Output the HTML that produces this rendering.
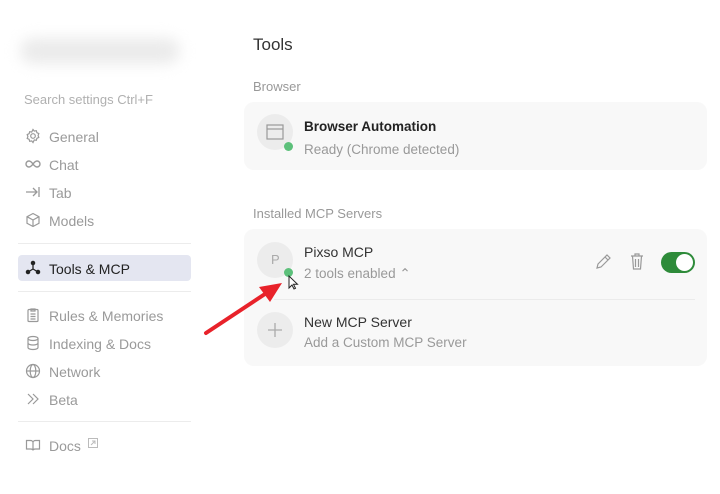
<!DOCTYPE html>
<html><head><meta charset="utf-8"><style>
*{margin:0;padding:0;box-sizing:border-box}
body{width:720px;height:494px;background:#fff;font-family:"Liberation Sans",sans-serif;position:relative;overflow:hidden;color:#222}
.a{position:absolute}
.it{position:absolute;left:49px;font-size:14px;color:#9a9a9a}
.ic{position:absolute;left:25px;width:16px;height:16px}
.sep{position:absolute;left:18px;width:173px;height:1px;background:#ececec}
.card{position:absolute;left:244px;width:463px;background:#f8f8f8;border-radius:10px}
.circ{position:absolute;width:36px;height:36px;border-radius:50%;background:#ececec}
.dot{position:absolute;width:9px;height:9px;border-radius:50%;background:#5cc07a}
</style></head><body>
<div class="a" style="left:20px;top:38px;width:160px;height:26px;border-radius:13px;background:#ebebeb;filter:blur(7px)"></div>
<div class="a" style="left:24px;top:92px;font-size:13px;color:#b0b0b0">Search settings Ctrl+F</div>

<svg class="ic" style="top:128px" viewBox="0 0 16 16" fill="none" stroke="#999" stroke-width="1.2"><circle cx="8" cy="8" r="2.3"/><path d="M8 1.5l1.3 1.6 2-.4.6 2 1.9.9-.7 1.9.7 1.9-1.9.9-.6 2-2-.4L8 14.5l-1.3-1.6-2 .4-.6-2-1.9-.9.7-1.9-.7-1.9 1.9-.9.6-2 2 .4z"/></svg>
<div class="it" style="top:129px">General</div>
<svg class="ic" style="top:156px" viewBox="0 0 16 16" fill="none" stroke="#999" stroke-width="1.4"><path d="M8 8c-1.5-2-2.5-3-4-3a3 3 0 000 6c1.5 0 2.5-1 4-3s2.5-3 4-3a3 3 0 010 6c-1.5 0-2.5-1-4-3z"/></svg>
<div class="it" style="top:157px">Chat</div>
<svg class="ic" style="top:184px" viewBox="0 0 16 16" fill="none" stroke="#999" stroke-width="1.3"><path d="M1 8h11M8 4l4 4-4 4M14 3v10"/></svg>
<div class="it" style="top:185px">Tab</div>
<svg class="ic" style="top:212px" viewBox="0 0 16 16" fill="none" stroke="#999" stroke-width="1.2"><path d="M8 1.5l6 3.2v6.6L8 14.5 2 11.3V4.7zM2 4.7L8 8l6-3.3M8 8v6.5"/></svg>
<div class="it" style="top:213px">Models</div>
<div class="sep" style="top:243px"></div>
<div class="a" style="left:18px;top:255px;width:173px;height:26px;background:#e4e6f1;border-radius:4px"></div>
<svg class="ic" style="top:260px" viewBox="0 0 16 16" fill="#222" stroke="#222" stroke-width="1.3"><path d="M8 3v6M8 9l-5 3M8 9l5 3"/><circle cx="8" cy="3" r="1.6"/><circle cx="3" cy="12" r="1.6"/><circle cx="13" cy="12" r="1.6"/></svg>
<div class="it" style="top:261px;color:#222">Tools &amp; MCP</div>
<div class="sep" style="top:291px"></div>
<svg class="ic" style="top:307px" viewBox="0 0 16 16" fill="none" stroke="#999" stroke-width="1.2"><rect x="3" y="2.5" width="10" height="12" rx="1"/><path d="M6 2h4v2H6zM5.5 7h5M5.5 9.5h5M5.5 12h5"/></svg>
<div class="it" style="top:308px">Rules &amp; Memories</div>
<svg class="ic" style="top:335px" viewBox="0 0 16 16" fill="none" stroke="#999" stroke-width="1.2"><ellipse cx="8" cy="3.5" rx="5" ry="2"/><path d="M3 3.5v9c0 1.1 2.2 2 5 2s5-.9 5-2v-9M3 8c0 1.1 2.2 2 5 2s5-.9 5-2"/></svg>
<div class="it" style="top:336px">Indexing &amp; Docs</div>
<svg class="ic" style="top:363px" viewBox="0 0 16 16" fill="none" stroke="#999" stroke-width="1.2"><circle cx="8" cy="8" r="6.5"/><ellipse cx="8" cy="8" rx="2.8" ry="6.5"/><path d="M1.5 8h13"/></svg>
<div class="it" style="top:364px">Network</div>
<svg class="ic" style="top:391px" viewBox="0 0 16 16" fill="none" stroke="#999" stroke-width="1.2"><path d="M3 3l5 5-5 5M8 3l5 5-5 5"/></svg>
<div class="it" style="top:392px">Beta</div>
<div class="sep" style="top:421px"></div>
<svg class="ic" style="top:437px" viewBox="0 0 16 16" fill="none" stroke="#999" stroke-width="1.2"><path d="M1.5 3.5h4c1.4 0 2.5.8 2.5 2v8c0-1-1-1.5-2.5-1.5h-4zM14.5 3.5h-4c-1.4 0-2.5.8-2.5 2v8c0-1 1-1.5 2.5-1.5h4z"/></svg>
<div class="it" style="top:438px">Docs</div>
<svg class="a" style="left:88px;top:438px" width="10" height="10" viewBox="0 0 10 10" fill="none" stroke="#bbb" stroke-width="1"><rect x=".5" y=".5" width="9" height="9"/><path d="M3 7l4-4M4 3h3v3"/></svg>

<div class="a" style="left:253px;top:35px;font-size:17px;color:#333">Tools</div>
<div class="a" style="left:253px;top:79px;font-size:13px;color:#999">Browser</div>
<div class="card" style="top:102px;height:68px">
 <div class="circ" style="left:13px;top:12px"></div>
 <svg class="a" style="left:22px;top:22px" width="18" height="16" viewBox="0 0 18 16" fill="none" stroke="#999" stroke-width="1.2"><rect x="1" y="1" width="16" height="14"/><path d="M1 5h16"/></svg>
 <div class="dot" style="left:40px;top:40px"></div>
 <div class="a" style="left:60px;top:17px;font-size:13.5px;font-weight:bold;color:#222">Browser Automation</div>
 <div class="a" style="left:60px;top:40px;font-size:13.5px;color:#999">Ready (Chrome detected)</div>
</div>
<div class="a" style="left:253px;top:206px;font-size:13px;color:#999">Installed MCP Servers</div>
<div class="card" style="top:229px;height:137px">
 <div class="circ" style="left:13px;top:13px"></div>
 <div class="a" style="left:27px;top:23px;font-size:13px;color:#aaa">P</div>
 <div class="dot" style="left:40px;top:39px"></div>
 <div class="a" style="left:60px;top:15px;font-size:14px;color:#333">Pixso MCP</div>
 <div class="a" style="left:60px;top:37px;font-size:13.5px;color:#999">2 tools enabled ⌃</div>
 <svg class="a" style="left:350px;top:24px" width="18" height="18" viewBox="0 0 18 18" fill="none" stroke="#999" stroke-width="1.2"><path d="M3 15l1-4 9-9 3 3-9 9zM11 4l3 3"/></svg>
 <svg class="a" style="left:386px;top:24px" width="14" height="17" viewBox="0 0 14 17" fill="none" stroke="#999" stroke-width="1.2"><path d="M1 3h12M5 3V1h4v2M2.5 3l1 13h7l1-13M5.5 6v8M8.5 6v8"/></svg>
 <div class="a" style="left:417px;top:23px;width:34px;height:21px;border-radius:11px;background:#2e8b3a"><div class="a" style="left:15px;top:2px;width:17px;height:17px;border-radius:50%;background:#fff"></div></div>
 <div class="a" style="left:30px;top:70px;width:421px;height:1px;background:#ebebeb"></div>
 <div class="circ" style="left:13px;top:83px"></div>
 <svg class="a" style="left:22px;top:92px" width="18" height="18" viewBox="0 0 18 18" stroke="#aaa" stroke-width="1.3"><path d="M9 2v14M2 9h14"/></svg>
 <div class="a" style="left:60px;top:85px;font-size:14px;color:#333">New MCP Server</div>
 <div class="a" style="left:60px;top:106px;font-size:13.5px;color:#999">Add a Custom MCP Server</div>
</div>
<svg class="a" style="left:0;top:0" width="720" height="494"><path d="M206 333L268 292" stroke="#e8222a" stroke-width="4" stroke-linecap="round"/><path d="M282 283L259 287 270 302z" fill="#e8222a"/><path d="M289 276v12l3-3 2 4 1.5-.7-2-4h4z" fill="#fff" stroke="#222" stroke-width="1"/></svg>
</body></html>
